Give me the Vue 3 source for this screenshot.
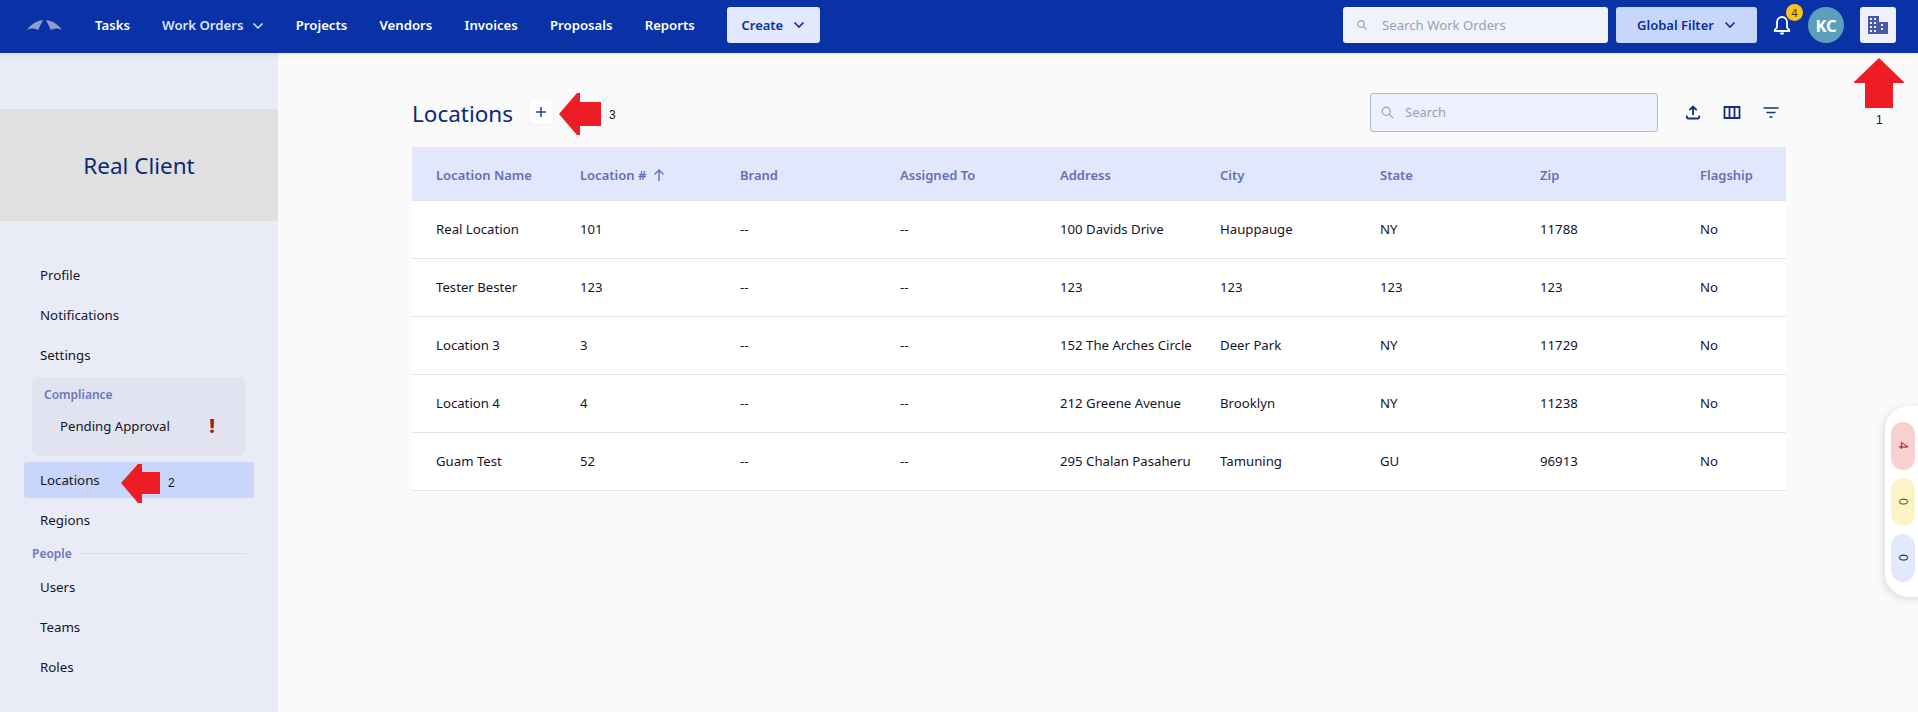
<script setup>
const nav = ['Tasks', 'Work Orders', 'Projects', 'Vendors', 'Invoices', 'Proposals', 'Reports']
const cols = ['Location Name', 'Location #', 'Brand', 'Assigned To', 'Address', 'City', 'State', 'Zip', 'Flagship']
const rows = [
  ['Real Location', '101', '--', '--', '100 Davids Drive', 'Hauppauge', 'NY', '11788', 'No'],
  ['Tester Bester', '123', '--', '--', '123', '123', '123', '123', 'No'],
  ['Location 3', '3', '--', '--', '152 The Arches Circle', 'Deer Park', 'NY', '11729', 'No'],
  ['Location 4', '4', '--', '--', '212 Greene Avenue', 'Brooklyn', 'NY', '11238', 'No'],
  ['Guam Test', '52', '--', '--', '295 Chalan Pasaheru', 'Tamuning', 'GU', '96913', 'No'],
]
</script>

<template>
  <div class="page">
    <header class="topbar">
      <svg class="logo" width="35" height="10" viewBox="0 0 35 10"><path d="M0 10C3 5 9 1 16 0L11 10C7 8 4 8 0 10Z M19 0C26 1 32 5 35 10C31 8 28 8 24 10Z" fill="#8d9bd0"/></svg>
      <nav class="nav">
        <a v-for="n in nav" :key="n" class="nav-item">{{ n }}
          <svg v-if="n === 'Work Orders'" class="chev" width="12" height="8" viewBox="0 0 12 8"><path d="M1.500 1.500 6 6l4.500-4.500" fill="none" stroke="#dfe5fb" stroke-width="1.500"/></svg>
        </a>
      </nav>
      <button class="create">Create
        <svg width="12" height="8" viewBox="0 0 12 8"><path d="M1.500 1.500 6 6l4.500-4.500" fill="none" stroke="#0b2f9f" stroke-width="1.600"/></svg>
      </button>
      <div class="spacer"></div>
      <div class="top-search">
        <svg width="12" height="12" viewBox="0 0 24 24"><circle cx="10" cy="10" r="6.500" fill="none" stroke="#a3a8bd" stroke-width="2.600"/><path d="m15 15 6 6" stroke="#a3a8bd" stroke-width="2.600"/></svg>
        <span>Search Work Orders</span>
      </div>
      <button class="global">Global Filter
        <svg width="12" height="8" viewBox="0 0 12 8"><path d="M1.500 1.500 6 6l4.500-4.500" fill="none" stroke="#0b2f9f" stroke-width="1.600"/></svg>
      </button>
      <div class="bell">
        <svg width="18" height="21" viewBox="0 0 18 21"><path d="M9 2C5.800 2 4 4.500 4 7.500v5l-2.200 2.400V16h14.400v-1.100L14 12.500v-5C14 4.500 12.200 2 9 2Z" fill="none" stroke="#fff" stroke-width="1.800"/><path d="M6.800 17.500h4.400a2.200 2.200 0 0 1-4.400 0Z" fill="#fff"/></svg>
        <span class="badge">4</span>
      </div>
      <div class="avatar">KC</div>
      <button class="org" aria-label="Organization">
        <svg width="20" height="18" viewBox="0 0 20 18" fill="#4a5aa8"><path fill-rule="evenodd" d="M0 0h11v6h9v12H0ZM2 2v2h2V2Zm4 0v2h2V2ZM2 6v2h2V6Zm4 0v2h2V6Zm7 2v2h2V8ZM2 10v2h2v-2Zm4 0v2h2v-2Zm7 2v2h2v-2ZM2 14v2h2v-2Zm4 0v2h2v-2Z"/></svg>
      </button>
    </header>

    <div class="body">
      <aside class="side">
        <div class="client">Real Client</div>
        <ul class="menu">
          <li class="item">Profile</li>
          <li class="item">Notifications</li>
          <li class="item">Settings</li>
          <li class="compliance">
            <div class="group-title">Compliance</div>
            <div class="pending"><span>Pending Approval</span><b class="bang">!</b></div>
          </li>
          <li class="item active">Locations</li>
          <li class="item">Regions</li>
          <li class="people"><span>People</span><i></i></li>
          <li class="item">Users</li>
          <li class="item">Teams</li>
          <li class="item">Roles</li>
        </ul>
      </aside>

      <main class="main">
        <div class="head">
          <h1>Locations</h1>
          <button class="add" aria-label="Add">
            <svg width="12" height="12" viewBox="0 0 12 12"><path d="M6 1v10M1 6h10" stroke="#2e46a8" stroke-width="1.600"/></svg>
          </button>
          <div class="spacer"></div>
          <div class="search">
            <svg width="15" height="15" viewBox="0 0 24 24"><circle cx="10" cy="10" r="6.500" fill="none" stroke="#a3a8bd" stroke-width="2.200"/><path d="m15 15 6 6" stroke="#a3a8bd" stroke-width="2.200"/></svg>
            <span>Search</span>
          </div>
          <div class="tools">
            <svg width="18" height="18" viewBox="0 0 18 18"><path d="M9 12V3.500M5.300 7.200 9 3.500l3.700 3.700M2.800 12.500V14a1.500 1.500 0 0 0 1.500 1.500h9.400a1.500 1.500 0 0 0 1.500-1.500v-1.500" fill="none" stroke="#12307f" stroke-width="1.800"/></svg>
            <svg width="18" height="18" viewBox="0 0 18 18"><path d="M1.500 4h15v11h-15ZM6.500 4v11M11.500 4v11" fill="none" stroke="#12307f" stroke-width="1.800"/></svg>
            <svg width="18" height="18" viewBox="0 0 18 18"><path d="M1.500 5h15M4.500 9.500h9M7.500 14h3" fill="none" stroke="#12307f" stroke-width="1.700"/></svg>
          </div>
        </div>

        <div class="table">
          <div class="tr th">
            <div v-for="c in cols" :key="c" class="cell">{{ c }}
              <svg v-if="c === 'Location #'" class="sort" width="14" height="14" viewBox="0 0 14 14"><path d="M7 13V2M2.500 6.500 7 2l4.500 4.500" fill="none" stroke="#6a76b8" stroke-width="1.500"/></svg>
            </div>
          </div>
          <div v-for="r in rows" :key="r[0]" class="tr td">
            <div v-for="(v, i) in r" :key="i" class="cell">{{ v }}</div>
          </div>
        </div>
      </main>
    </div>

    <div class="float">
      <span class="pill red">4</span>
      <span class="pill yellow">0</span>
      <span class="pill blue">0</span>
    </div>

    <div class="note n1">
      <svg width="50" height="50" viewBox="0 0 50 50"><path d="M25 0 50 24v1H39V50H11V25H0v-1Z" fill="#ee1c25"/></svg>
      <span>1</span>
    </div>
    <div class="note n2">
      <svg width="39" height="39" viewBox="0 0 39 39"><path d="M0 19 17 0h4V8H39V30H21v9h-4Z" fill="#ee1c25"/></svg>
      <span>2</span>
    </div>
    <div class="note n3">
      <svg width="42" height="42" viewBox="0 0 42 42"><path d="M0 21 18 0h3V9H42V33H21v9h-3Z" fill="#ee1c25"/></svg>
      <span>3</span>
    </div>
  </div>
</template>

<style>
html, body { margin: 0; }
</style>

<style scoped>
* { box-sizing: border-box; }
.page { position: relative; width: 1918px; height: 712px; overflow: hidden; background: #fafafa; font-family: "Noto Sans", "Open Sans", sans-serif; font-size: 13px; color: #15151f; }
.topbar { position: relative; z-index: 2; height: 53px; background: #0832a6; display: flex; align-items: center; padding-left: 27px; box-shadow: 0 2px 6px rgba(0,0,0,.06); }
.logo { margin-right: 33px; margin-top: -4px; }
.nav { display: flex; gap: 32.200px; }
.nav-item { color: #fff; font-weight: 600; font-size: 13.200px; display: flex; align-items: center; gap: 8px; margin-top: -3px; }
.nav-item:nth-child(2) { color: #dfe5fb; }
.chev { margin-top: 1px; }
button { font-family: inherit; border: 0; }
.create { margin-left: 32px; width: 93px; height: 36px; border-radius: 3px; background: #e2e8fd; color: #0b2f9f; font-weight: 600; font-size: 13px; display: flex; align-items: center; justify-content: center; gap: 10px; margin-top: -3px; }
.spacer { flex: 1; }
.top-search { width: 265px; height: 36px; border-radius: 3px; background: #f1f3fb; display: flex; align-items: center; gap: 14px; padding-left: 13px; color: #9a9fb4; font-size: 13.200px; margin-top: -3px; }
.global { margin-left: 8px; width: 141px; height: 36px; border-radius: 3px; background: #c8d6fb; color: #0b2f9f; font-weight: 600; font-size: 13px; display: flex; align-items: center; justify-content: center; gap: 10px; margin-top: -3px; }
.bell { position: relative; margin-left: 16px; width: 18px; height: 21px; margin-top: -3px; }
.bell svg { display: block; }
.badge { position: absolute; left: 13px; top: -11px; width: 17px; height: 17px; border-radius: 50%; background: #fcc419; color: #333; font-size: 11px; line-height: 17px; text-align: center; }
.avatar { margin-left: 17px; width: 36px; height: 36px; border-radius: 50%; background: #5b9fbd; color: #fff; font-weight: 700; font-size: 16.500px; display: flex; align-items: center; justify-content: center; margin-top: -3px; }
.org { margin-left: 16px; margin-right: 22px; width: 36px; height: 36px; border-radius: 3px; background: #eef1fd; display: flex; align-items: center; justify-content: center; padding: 0; margin-top: -3px; }

.body { display: flex; height: 659px; }
.side { width: 278px; flex: none; background: #e9ecf6; padding-top: 56px; }
.client { height: 112px; background: #e0e0e0; display: flex; align-items: center; justify-content: center; color: #0b2a78; font-size: 22.500px; }
.menu { list-style: none; margin: 0; padding: 36px 24px 0; }
.item { height: 36px; margin: 0 0 4px; padding-left: 16px; display: flex; align-items: center; color: #15151f; font-size: 13.300px; border-radius: 3px; width: 230px; }
.compliance { margin: 0 8px 6px; width: 214px; height: 79px; border-radius: 8px; background: #e1e3f0; padding: 9px 12px; }
.group-title { color: #6b78bb; font-weight: 600; font-size: 12px; }
.pending { display: flex; align-items: center; justify-content: space-between; margin-top: 13px; padding-left: 16px; padding-right: 19px; font-size: 13.200px; }
.bang { color: #9b1c1c; font-size: 20px; font-weight: 800; line-height: 20px; }
.active { background: #c8d6fb; }
.people { display: flex; align-items: center; gap: 8px; margin: 2px 8px 5px; width: 214px; height: 22px; color: #6b78bb; font-weight: 600; font-size: 12px; }
.people i { flex: 1; height: 1px; background: #d6d9e8; }

.main { flex: 1; padding: 39px 132px 0 134px; }
.head { height: 55px; padding-bottom: 15px; display: flex; align-items: center; }
h1 { margin: 2px 0 0; font-size: 22.500px; font-weight: 400; color: #0b2a78; }
.add { margin-left: 16px; width: 24px; height: 24px; border-radius: 6px; background: #fff; display: flex; align-items: center; justify-content: center; padding: 0; box-shadow: 0 1px 3px rgba(0,0,0,.06); }
.search { flex: none; width: 288px; height: 39px; border: 1px solid #aeb7dc; border-radius: 3px; background: #edf1fe; display: flex; align-items: center; gap: 10px; padding-left: 9px; color: #9a9fb4; font-size: 13px; }
.tools { display: flex; gap: 21px; margin-left: 26px; margin-right: 6px; }
.table { background: #fff; border-top: 1px solid #e6e7ea; }
.tr { display: grid; grid-template-columns: 144px repeat(7, 160px) 110px; align-items: center; }
.th { height: 52px; padding-top: 1px; background: #e1e8fd; color: #6470b4; font-weight: 600; font-size: 13px; }
.td { height: 58px; border-top: 1px solid #e3e4e8; font-size: 13.200px; color: #15151f; padding-bottom: 2px; }
.td:last-child { border-bottom: 1px solid #e3e4e8; height: 59px; }
.cell { padding-left: 24px; white-space: nowrap; display: flex; align-items: center; gap: 6px; }

.float { position: absolute; z-index: 3; left: 1885px; top: 406px; width: 60px; height: 191px; padding: 16px 0 0 6px; background: #fff; border-radius: 24px 0 0 24px; box-shadow: -2px 2px 8px rgba(0,0,0,.12); display: flex; flex-direction: column; gap: 8px; }
.pill { width: 24px; height: 48px; border-radius: 12px; display: flex; align-items: center; justify-content: center; font-size: 12.500px; writing-mode: vertical-rl; }
.red { background: #f9d0d0; color: #9b1c1c; }
.yellow { background: #fdf3c8; color: #7a5c10; }
.blue { background: #e3e9fd; color: #12307f; }

.note { position: absolute; z-index: 4; font-family: "Liberation Sans", sans-serif; font-size: 12px; color: #111; }
.note svg { display: block; }
.note span { position: absolute; white-space: nowrap; }
.n1 { left: 1854px; top: 58px; }
.n1 span { left: 22px; top: 55px; }
.n2 { left: 121px; top: 464px; }
.n2 span { left: 47px; top: 12px; }
.n3 { left: 559px; top: 93px; }
.n3 span { left: 50px; top: 15px; }
</style>
